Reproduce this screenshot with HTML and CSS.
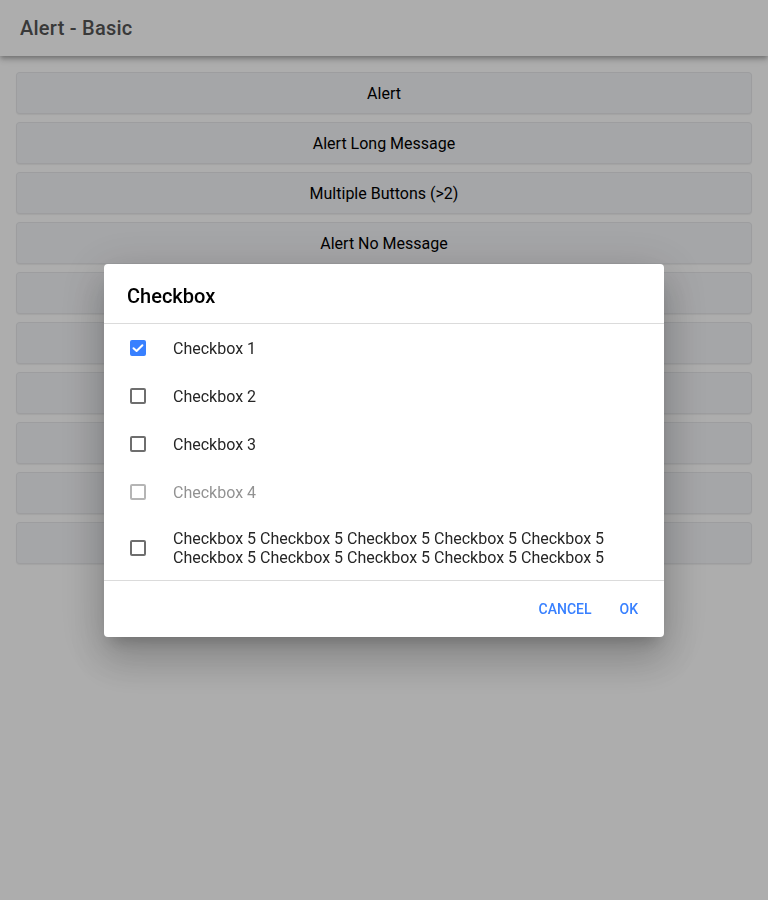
FILE: index.html
```html
<!DOCTYPE html>
<html lang="en">
<head>
<meta charset="utf-8">
<title>Alert - Basic</title>
<link rel="stylesheet" href="styles.css">
</head>
<body>
<div class="app">
  <header class="toolbar"><h1 class="toolbar-title">Alert - Basic</h1></header>
  <main class="content">
    <button class="btn">Alert</button>
    <button class="btn">Alert Long Message</button>
    <button class="btn">Multiple Buttons (&gt;2)</button>
    <button class="btn">Alert No Message</button>
    <button class="btn">Confirm</button>
    <button class="btn">Prompt</button>
    <button class="btn">Radio</button>
    <button class="btn">Checkbox</button>
    <button class="btn">Custom Class</button>
    <button class="btn">Callback</button>
  </main>
</div>
<div class="backdrop"></div>
<div class="alert-wrapper">
  <div class="alert">
    <div class="alert-head"><h2 class="alert-title">Checkbox</h2></div>
    <div class="alert-group">
      <div class="alert-item">
        <span class="cb cb-checked"><svg viewBox="0 0 16 16" width="16" height="16"><polyline points="3.5,8.2 6.6,11 12.4,5.2" fill="none" stroke="#fff" stroke-width="2" stroke-linecap="round" stroke-linejoin="round"/></svg></span>
        <span class="alert-label">Checkbox 1</span>
      </div>
      <div class="alert-item">
        <span class="cb"></span>
        <span class="alert-label">Checkbox 2</span>
      </div>
      <div class="alert-item">
        <span class="cb"></span>
        <span class="alert-label">Checkbox 3</span>
      </div>
      <div class="alert-item disabled">
        <span class="cb"></span>
        <span class="alert-label">Checkbox 4</span>
      </div>
      <div class="alert-item">
        <span class="cb"></span>
        <span class="alert-label">Checkbox 5 Checkbox 5 Checkbox 5 Checkbox 5 Checkbox 5 Checkbox 5 Checkbox 5 Checkbox 5 Checkbox 5 Checkbox 5</span>
      </div>
    </div>
    <div class="alert-buttons">
      <button class="alert-btn">Cancel</button>
      <button class="alert-btn">Ok</button>
    </div>
  </div>
</div>
</body>
</html>
```

FILE: styles.css
```css
* { box-sizing: border-box; }
html, body {
  margin: 0;
  padding: 0;
  height: 100%;
}
body {
  font-family: Roboto, "Liberation Sans", sans-serif;
  background: #fff;
  overflow: hidden;
}
.app {
  height: 900px;
  display: flex;
  flex-direction: column;
}
.toolbar {
  height: 56px;
  display: flex;
  align-items: center;
  padding: 0 20px;
  background: #fff;
  box-shadow: 0 2px 4px -1px rgba(0,0,0,.2), 0 4px 5px 0 rgba(0,0,0,.14), 0 1px 10px 0 rgba(0,0,0,.12);
  position: relative;
  z-index: 1;
}
.toolbar-title {
  margin: 0;
  font-size: 20px;
  font-weight: 500;
  color: #545454;
  letter-spacing: .0125em;
}
.content {
  padding: 16px;
  display: flex;
  flex-direction: column;
  gap: 8px;
}
.btn {
  height: 42px;
  border: 0;
  border-radius: 4px;
  background: #f4f5f8;
  font-family: Roboto, "Liberation Sans", sans-serif;
  font-size: 16px;
  color: #000;
  box-shadow: inset 0 0 0 1px rgba(0,0,0,.05), 0 1px 1px rgba(0,0,0,.06);
}
.backdrop {
  position: fixed;
  inset: 0;
  background: rgba(0,0,0,.32);
  z-index: 5;
}
.alert-wrapper {
  position: fixed;
  inset: 0;
  z-index: 10;
  display: flex;
  justify-content: center;
  padding-top: 264px;
  align-items: flex-start;
}
.alert {
  width: 560px;
  background: #fff;
  border-radius: 4px;
  box-shadow: 0 11px 15px -7px rgba(0,0,0,.2), 0 24px 38px 3px rgba(0,0,0,.14), 0 9px 46px 8px rgba(0,0,0,.12);
}
.alert-head {
  padding: 21px 23px 15px;
}
.alert-title {
  margin: 0;
  font-size: 20px;
  font-weight: 500;
  color: #000;
  line-height: 23px;
}
.alert-group {
  border-top: 1px solid rgba(0,0,0,.14);
  border-bottom: 1px solid rgba(0,0,0,.14);
}
.alert-item {
  display: flex;
  align-items: center;
  min-height: 48px;
  padding: 13px 26px 13px 26px;
}
.alert-item.disabled { opacity: .5; }
.cb {
  flex: none;
  width: 16px;
  height: 16px;
  border: 2px solid #6e6e6e;
  border-radius: 2px;
  margin-right: 27px;
  position: relative;
}
.cb-checked {
  background: #3880ff;
  border-color: #3880ff;
}
.cb-checked svg {
  position: absolute;
  left: -2px;
  top: -2px;
}
.alert-label {
  font-size: 16px;
  line-height: 19px;
  color: #262626;
}
.alert-buttons {
  height: 56px;
  padding: 8px;
  display: flex;
  justify-content: flex-end;
  align-items: center;
}
.alert-btn {
  border: 0;
  background: transparent;
  padding: 10px;
  margin-right: 8px;
  font-family: Roboto, "Liberation Sans", sans-serif;
  font-size: 14px;
  font-weight: 500;
  text-transform: uppercase;
  color: #3880ff;
  letter-spacing: 0;
}
```
